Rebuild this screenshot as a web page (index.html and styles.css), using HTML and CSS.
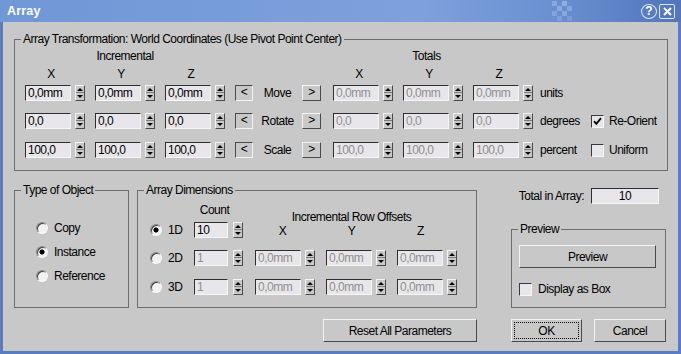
FILE: index.html
```html
<!DOCTYPE html>
<html lang="en">
<head>
    <meta charset="UTF-8">
    <title>Array</title>
    <link rel="stylesheet" href="styles.css">
</head>
<body>

    <div class="window">
        <div class="titlebar">
            <span class="title">Array</span>
            <svg class="checker" width="25" height="20" viewBox="0 0 25 20">
                <rect x="0" y="0" width="5" height="5" fill="#a4bde8" opacity="0.55"/>
                <rect x="10" y="0" width="5" height="5" fill="#a4bde8" opacity="0.7"/>
                <rect x="5" y="5" width="5" height="5" fill="#a4bde8" opacity="0.6"/>
                <rect x="15" y="5" width="5" height="5" fill="#a4bde8" opacity="0.5"/>
                <rect x="0" y="10" width="5" height="5" fill="#a4bde8" opacity="0.45"/>
                <rect x="10" y="10" width="5" height="5" fill="#a4bde8" opacity="0.55"/>
                <rect x="5" y="15" width="5" height="5" fill="#a4bde8" opacity="0.35"/>
                <rect x="15" y="15" width="5" height="5" fill="#a4bde8" opacity="0.3"/>
            </svg>
            <span class="tb-btn help">?</span>
            <span class="tb-btn close">
                <svg width="9" height="9" viewBox="0 0 9 9"><path d="M1 1L8 8M8 1L1 8" stroke="#fff" stroke-width="2"/></svg>
            </span>
        </div>

        <div class="client">
            <fieldset class="group transform">
                <legend>Array Transformation: World Coordinates (Use Pivot Point Center)</legend>
                <div class="xform-body">
                    <div class="head-row">
                        <span class="head-inc">Incremental</span>
                        <span class="head-tot">Totals</span>
                    </div>
                    <div class="axis-row">
                        <div class="axes"><span>X</span><span>Y</span><span>Z</span></div>
                        <div class="axes tot"><span>X</span><span>Y</span><span>Z</span></div>
                    </div>

                    <div class="xform-row">
                        <div class="spins">
                            <div class="spin"><div class="field">0,0mm</div><div class="spinner"></div></div>
                            <div class="spin"><div class="field">0,0mm</div><div class="spinner"></div></div>
                            <div class="spin"><div class="field">0,0mm</div><div class="spinner"></div></div>
                        </div>
                        <div class="shift sunken">&lt;</div>
                        <div class="op">Move</div>
                        <div class="shift">&gt;</div>
                        <div class="spins tot">
                            <div class="spin"><div class="field off">0,0mm</div><div class="spinner"></div></div>
                            <div class="spin"><div class="field off">0,0mm</div><div class="spinner"></div></div>
                            <div class="spin"><div class="field off">0,0mm</div><div class="spinner"></div></div>
                        </div>
                        <div class="unit">units</div>
                    </div>

                    <div class="xform-row">
                        <div class="spins">
                            <div class="spin"><div class="field">0,0</div><div class="spinner"></div></div>
                            <div class="spin"><div class="field">0,0</div><div class="spinner"></div></div>
                            <div class="spin"><div class="field">0,0</div><div class="spinner"></div></div>
                        </div>
                        <div class="shift sunken">&lt;</div>
                        <div class="op">Rotate</div>
                        <div class="shift">&gt;</div>
                        <div class="spins tot">
                            <div class="spin"><div class="field off">0,0</div><div class="spinner"></div></div>
                            <div class="spin"><div class="field off">0,0</div><div class="spinner"></div></div>
                            <div class="spin"><div class="field off">0,0</div><div class="spinner"></div></div>
                        </div>
                        <div class="unit">degrees</div>
                        <label class="opt">
                            <span class="check"><svg width="11" height="11" viewBox="0 0 11 11"><path d="M2 5.2L4.3 7.8L9 2.2" fill="none" stroke="#000" stroke-width="1.8"/></svg></span>
                            Re-Orient
                        </label>
                    </div>

                    <div class="xform-row">
                        <div class="spins">
                            <div class="spin"><div class="field">100,0</div><div class="spinner"></div></div>
                            <div class="spin"><div class="field">100,0</div><div class="spinner"></div></div>
                            <div class="spin"><div class="field">100,0</div><div class="spinner"></div></div>
                        </div>
                        <div class="shift sunken">&lt;</div>
                        <div class="op">Scale</div>
                        <div class="shift">&gt;</div>
                        <div class="spins tot">
                            <div class="spin"><div class="field off">100,0</div><div class="spinner"></div></div>
                            <div class="spin"><div class="field off">100,0</div><div class="spinner"></div></div>
                            <div class="spin"><div class="field off">100,0</div><div class="spinner"></div></div>
                        </div>
                        <div class="unit">percent</div>
                        <label class="opt"><span class="check"></span>Uniform</label>
                    </div>
                </div>
            </fieldset>

            <div class="lower">
                <fieldset class="group type">
                    <legend>Type of Object</legend>
                    <div class="radio-list">
                        <label class="opt"><span class="radio"></span>Copy</label>
                        <label class="opt"><span class="radio on"></span>Instance</label>
                        <label class="opt"><span class="radio"></span>Reference</label>
                    </div>
                </fieldset>

                <fieldset class="group dims">
                    <legend>Array Dimensions</legend>
                    <div class="dims-grid">
                        <div class="count-label">Count</div>
                        <div class="offsets-head">
                            <div>Incremental Row Offsets</div>
                            <div class="axes wide"><span>X</span><span>Y</span><span>Z</span></div>
                        </div>

                        <label class="opt dim row1"><span class="radio on"></span>1D</label>
                        <div class="spin count row1"><div class="field">10</div><div class="spinner"></div></div>

                        <label class="opt dim row2"><span class="radio"></span>2D</label>
                        <div class="spin count row2"><div class="field off">1</div><div class="spinner"></div></div>
                        <div class="spins offs row2">
                            <div class="spin"><div class="field off">0,0mm</div><div class="spinner"></div></div>
                            <div class="spin"><div class="field off">0,0mm</div><div class="spinner"></div></div>
                            <div class="spin"><div class="field off">0,0mm</div><div class="spinner"></div></div>
                        </div>

                        <label class="opt dim row3"><span class="radio"></span>3D</label>
                        <div class="spin count row3"><div class="field off">1</div><div class="spinner"></div></div>
                        <div class="spins offs row3">
                            <div class="spin"><div class="field off">0,0mm</div><div class="spinner"></div></div>
                            <div class="spin"><div class="field off">0,0mm</div><div class="spinner"></div></div>
                            <div class="spin"><div class="field off">0,0mm</div><div class="spinner"></div></div>
                        </div>
                    </div>
                </fieldset>

                <div class="side">
                    <div class="total-row">
                        <span>Total in Array:</span>
                        <div class="field total">10</div>
                    </div>
                    <fieldset class="group preview">
                        <legend>Preview</legend>
                        <div class="preview-body">
                            <button type="button" class="btn preview-btn">Preview</button>
                            <label class="opt box-opt"><span class="check"></span>Display as Box</label>
                        </div>
                    </fieldset>
                </div>
            </div>

            <div class="actions">
                <button type="button" class="btn reset">Reset All Parameters</button>
                <button type="button" class="btn ok">OK</button>
                <button type="button" class="btn cancel">Cancel</button>
            </div>
        </div>
    </div>

</body>
</html>
```

FILE: styles.css
```css
body {
    margin: 0;
    font-family: "Liberation Sans", Arial, sans-serif;
    font-size: 12px;
    letter-spacing: -0.5px;
    line-height: 14px;
    color: #000;
    background: #c8c8c8;
}
.window {
    box-sizing: border-box;
    width: 681px;
    height: 354px;
    padding: 0 3px 3px;
    background: #5a7dc2;
    display: flex;
    flex-direction: column;
}

/* title bar */
.titlebar {
    height: 22px;
    margin: 0 -3px;
    padding: 0 6px 0 7px;
    display: flex;
    align-items: center;
    background: linear-gradient(to right, #7097d6 0%, #7da1dc 62%, #6a8fd0 82%, #5275bb 100%);
}
.title {
    font-weight: bold;
    font-size: 12.5px;
    letter-spacing: 0.2px;
    color: #fff;
}
.checker {
    margin-left: auto;
    margin-right: 64px;
}
.tb-btn {
    box-sizing: border-box;
    width: 16px;
    height: 15px;
    border: 1px solid #dde6f6;
    display: flex;
    align-items: center;
    justify-content: center;
    color: #fff;
    font-weight: bold;
    font-size: 12px;
    letter-spacing: 0;
}
.help {
    border-radius: 50%;
    margin-right: 2px;
}
.close {
    border-radius: 2px;
}

/* client area */
.client {
    flex: 1;
    background: #c8c8c8;
    padding: 11px 10px 0 11px;
}
.group {
    box-sizing: border-box;
    margin: 0;
    padding: 0;
    min-width: 0;
    border: 1px solid #6c6c6c;
}
.group legend {
    margin-left: 6px;
    padding: 0 2px;
    line-height: 13px;
}

/* common controls */
.field {
    box-sizing: border-box;
    width: 46px;
    height: 16px;
    padding: 0 2px;
    background: #e8e6ea;
    border: 1px solid;
    border-color: #2e2e2e #f6f6f6 #f6f6f6 #2e2e2e;
    white-space: nowrap;
    overflow: hidden;
}
.field.off {
    color: #8e8e8e;
}
.spin {
    display: flex;
    gap: 4px;
}
.spins {
    display: flex;
    gap: 10px;
}
.spinner {
    position: relative;
    box-sizing: border-box;
    width: 10px;
    height: 16px;
    border: 1px solid;
    border-color: #f4f4f4 #4a4a4a #4a4a4a #f4f4f4;
    background: linear-gradient(#c8c8c8 6px, #7c7c7c 6px, #7c7c7c 7px, #c8c8c8 7px);
}
.spinner::before,
.spinner::after {
    content: "";
    position: absolute;
    left: 1px;
    border-left: 3px solid transparent;
    border-right: 3px solid transparent;
}
.spinner::before {
    top: 2px;
    border-bottom: 3px solid #000;
}
.spinner::after {
    top: 9px;
    border-top: 3px solid #000;
}
.opt {
    display: flex;
    align-items: center;
    gap: 6px;
    height: 14px;
    white-space: nowrap;
}
.radio {
    box-sizing: border-box;
    width: 12px;
    height: 12px;
    border-radius: 50%;
    border: 1px solid;
    border-color: #8a8a8a #f8f8f8 #f8f8f8 #8a8a8a;
    background: #f2f2f2;
    box-shadow: inset 1px 1px 0 #404040;
}
.radio.on {
    background: radial-gradient(circle, #000 0 2.2px, #f2f2f2 2.9px);
}
.check {
    box-sizing: border-box;
    width: 13px;
    height: 13px;
    border: 1px solid;
    border-color: #3a3a3a #f6f6f6 #f6f6f6 #3a3a3a;
    background: #e8e6ea;
    display: flex;
}
.btn {
    box-sizing: border-box;
    height: 23px;
    margin: 0;
    padding: 0;
    border: 1px solid;
    border-color: #f4f4f4 #4a4a4a #4a4a4a #f4f4f4;
    background: #c8c8c8;
    font: inherit;
    letter-spacing: inherit;
    color: #000;
}

/* transform group */
.transform {
    height: 138px;
}
.xform-body {
    padding-left: 10px;
}
.head-row {
    margin-top: 3px;
    display: flex;
}
.head-inc {
    width: 200px;
    text-align: center;
}
.head-tot {
    width: 187px;
    margin-left: 108px;
    text-align: center;
}
.axis-row {
    margin-top: 4px;
    display: flex;
}
.axes {
    display: flex;
    gap: 10px;
}
.axes span {
    box-sizing: border-box;
    width: 60px;
    padding-right: 8px;
    text-align: center;
}
.axes.tot {
    margin-left: 108px;
}
.xform-row {
    display: flex;
    align-items: center;
    height: 16px;
    margin-top: 12px;
}
.axis-row + .xform-row {
    margin-top: 4px;
}
.xform-row:last-child {
    margin-top: 13px;
}
.shift {
    box-sizing: border-box;
    width: 19px;
    height: 16px;
    border: 1px solid;
    border-color: #f4f4f4 #4a4a4a #4a4a4a #f4f4f4;
    text-align: center;
    line-height: 13px;
}
.shift.sunken {
    width: 18px;
    margin-left: 10px;
    border-color: #4a4a4a #f4f4f4 #f4f4f4 #4a4a4a;
}
.op {
    width: 49px;
    text-align: center;
}
.spins.tot {
    margin-left: 12px;
}
.unit {
    width: 51px;
    margin-left: 7px;
}
.xform-row .opt {
    gap: 5px;
}

/* lower groups */
.lower {
    margin-top: 13px;
    display: flex;
}
.type {
    width: 115px;
    height: 124px;
}
.radio-list {
    display: flex;
    flex-direction: column;
    gap: 10px;
    padding: 24px 0 0 21px;
}
.dims {
    width: 340px;
    height: 124px;
    margin-left: 8px;
}
.dims-grid {
    display: grid;
    grid-template-columns: 44px 49px auto;
    grid-template-rows: 25px 28px 29px 16px;
    padding-left: 12px;
}
.count-label {
    grid-column: 2;
    grid-row: 1;
    align-self: end;
    margin-bottom: 5px;
    padding-right: 8px;
    text-align: center;
}
.offsets-head {
    grid-column: 3;
    grid-row: 1 / 3;
    align-self: start;
    width: 207px;
    margin: 13px 0 0 5px;
    text-align: center;
}
.axes.wide {
    gap: 0;
}
.axes.wide span {
    width: 69px;
    padding: 0;
}
.dim {
    grid-column: 1;
    height: 16px;
}
.row1 { grid-row: 2; align-self: start; }
.row2 { grid-row: 3; align-self: start; }
.row3 { grid-row: 4; align-self: start; }
.spin.count {
    grid-column: 2;
    gap: 5px;
}
.spin.count .field {
    width: 34px;
}
.spins.offs {
    grid-column: 3;
    margin-left: 12px;
    gap: 11px;
}

/* right column */
.side {
    width: 156px;
    margin-left: 34px;
}
.total-row {
    margin-top: 4px;
    padding-right: 8px;
    display: flex;
    justify-content: flex-end;
    align-items: center;
    gap: 7px;
    white-space: nowrap;
}
.field.total {
    width: 68px;
    text-align: center;
}
.preview {
    width: 155px;
    height: 85px;
    margin-top: 19px;
}
.preview-body {
    padding-left: 7px;
}
.preview-btn {
    display: block;
    width: 137px;
    margin-top: 9px;
}
.box-opt {
    margin-top: 14px;
}

/* bottom buttons */
.actions {
    margin-top: 11px;
    margin-right: 2px;
    display: flex;
    justify-content: flex-end;
}
.reset {
    width: 154px;
}
.ok {
    width: 71px;
    margin-left: 34px;
    outline: 1px dotted #000;
    outline-offset: -4px;
}
.cancel {
    width: 72px;
    margin-left: 12px;
}
```
